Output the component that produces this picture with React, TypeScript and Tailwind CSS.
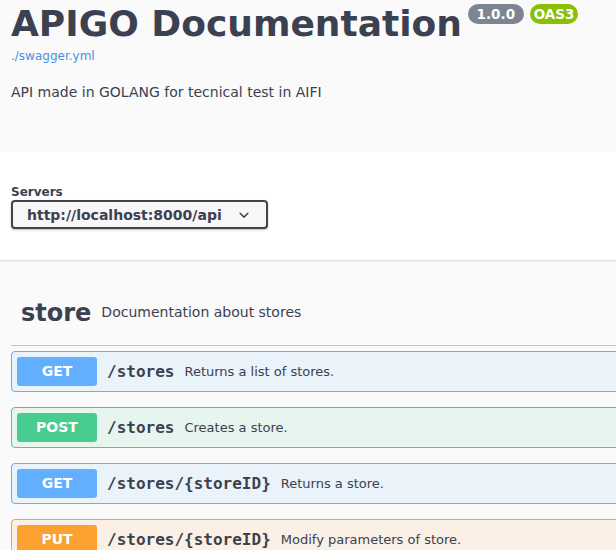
const sans = "font-['DejaVu_Sans','Liberation_Sans',sans-serif]";
const mono = "font-['DejaVu_Sans_Mono','Liberation_Mono',monospace]";

type Op = {
  method: "GET" | "POST" | "PUT";
  path: string;
  summary: string;
};

const ops: Op[] = [
  { method: "GET", path: "/stores", summary: "Returns a list of stores." },
  { method: "POST", path: "/stores", summary: "Creates a store." },
  { method: "GET", path: "/stores/{storeID}", summary: "Returns a store." },
  { method: "PUT", path: "/stores/{storeID}", summary: "Modify parameters of store." },
];

const methodStyle = {
  GET: { block: "border-[#61affe] bg-[rgba(97,175,254,0.1)]", badge: "bg-[#61affe]" },
  POST: { block: "border-[#49cc90] bg-[rgba(73,204,144,0.1)]", badge: "bg-[#49cc90]" },
  PUT: { block: "border-[#fca130] bg-[rgba(252,161,48,0.1)]", badge: "bg-[#fca130]" },
};

function Chevron() {
  return (
    <svg viewBox="0 0 20 20" className="size-5 shrink-0 text-[#3b4151]" aria-hidden>
      <path
        fill="currentColor"
        d="M13.418 7.859a.695.695 0 01.978 0 .68.68 0 010 .969l-3.908 3.83a.697.697 0 01-.979 0l-3.908-3.83a.68.68 0 010-.969.695.695 0 01.978 0L10 11l3.418-3.141z"
      />
    </svg>
  );
}

function OpBlock({ op }: { op: Op }) {
  const s = methodStyle[op.method];
  return (
    <div className={`mb-[15px] flex items-center rounded-[4px] border p-[5px] ${s.block}`}>
      <span
        className={`w-[80px] shrink-0 rounded-[3px] py-[6px] text-center text-[14px] font-bold leading-[17px] text-white ${s.badge}`}
      >
        {op.method}
      </span>
      <span className={`${mono} px-[10px] text-[16px] font-semibold leading-[19px] text-[#3b4151]`}>
        {op.path}
      </span>
      <span className="text-[13px] leading-[16px] text-[#3b4151]">{op.summary}</span>
    </div>
  );
}

export default function App() {
  return (
    <div className={`${sans} h-[550px] w-full overflow-hidden bg-[#fafafa] text-[#3b4151]`}>
      <div className="w-[800px]">
        {/* info */}
        <div className="px-[11px] pt-[3px] pb-[51px]">
          <div className="flex items-start">
            <h2 className="text-[36px] font-bold leading-[42px] text-[#3b4151]">
              APIGO Documentation
            </h2>
            <span className="mt-[1px] ml-[6px] flex h-[20px] items-center rounded-full bg-[#7d8492] px-[4px] text-[13.5px] leading-[16px] font-bold whitespace-pre text-white">
              {" 1.0.0 "}
            </span>
            <span className="mt-[1px] ml-[6px] flex h-[20px] items-center rounded-full bg-[#89bf04] px-[4px] text-[13.5px] leading-[16px] font-bold text-white">
              OAS3
            </span>
          </div>
          <a className="mt-[4px] block text-[12px] leading-[14px] text-[#4990e2]">./swagger.yml</a>
          <p className="mt-[21px] text-[14px] leading-[16px]">
            API made in GOLANG for tecnical test in AIFI
          </p>
        </div>

        {/* servers */}
        <div className="bg-white px-[11px] pt-[34px] pb-[31px] shadow-[0_1px_2px_0_rgba(0,0,0,0.15)]">
          <div className="text-[12px] font-bold leading-[15px]">Servers</div>
          <div className="flex h-[29px] w-[257px] items-center justify-between rounded-[4px] border-2 border-[#41444e] bg-[#f7f7f7] pr-[12px] pl-[14px] shadow-[0_1px_2px_0_rgba(0,0,0,0.25)]">
            <span className="text-[14px] font-bold leading-[16px]">http://localhost:8000/api</span>
            <Chevron />
          </div>
        </div>

        {/* tag */}
        <div className="px-[11px]">
          <div className="mt-[30px] mb-[5px] flex items-center border-b border-[rgba(59,65,81,0.3)] pt-[9px] pr-[20px] pb-[18px] pl-[10px]">
            <span className="text-[24px] font-bold leading-[28px]">store</span>
            <span className="mb-[2px] px-[10px] text-[14px] leading-[16px]">
              Documentation about stores
            </span>
          </div>
          {ops.map((op, i) => (
            <OpBlock key={i} op={op} />
          ))}
        </div>
      </div>
    </div>
  );
}
